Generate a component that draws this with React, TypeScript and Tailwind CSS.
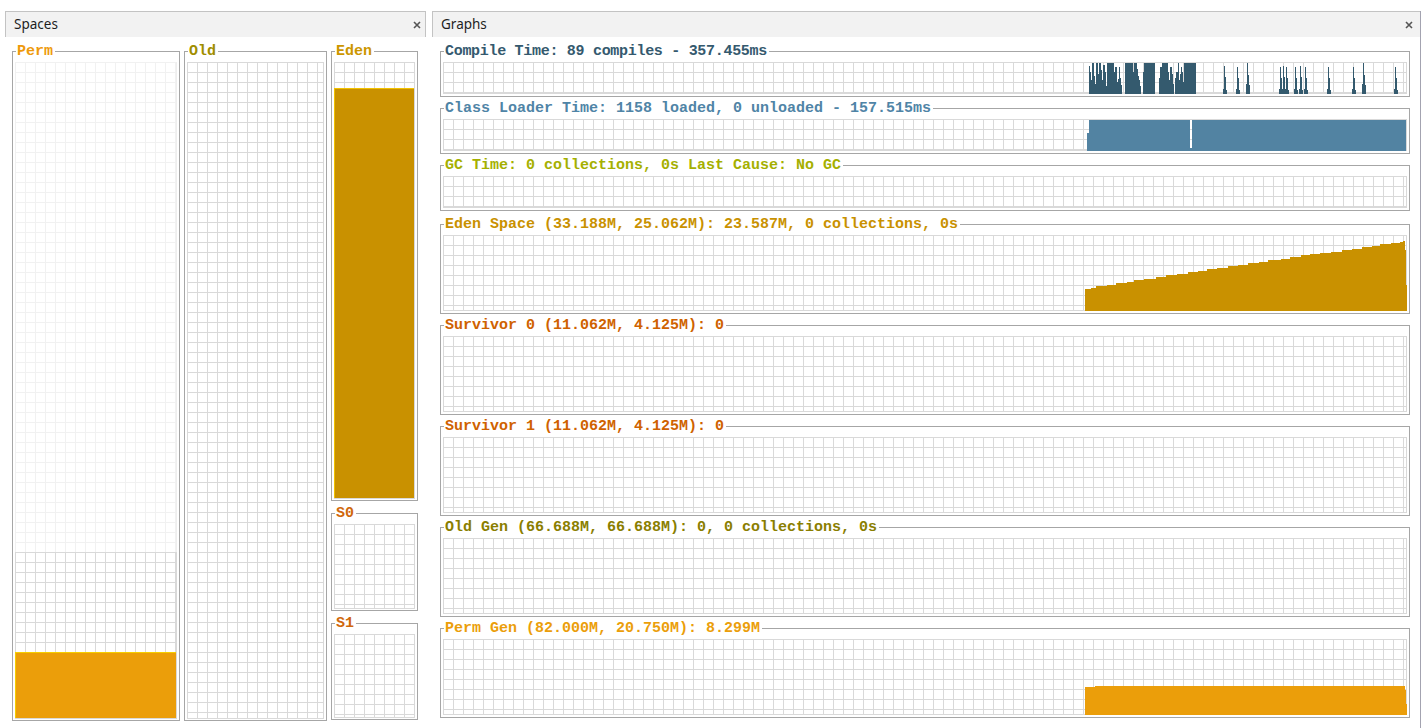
import type { ReactNode } from "react";

/**
 * VisualGC style view: Spaces + Graphs panels
 */

const GRID =
  "bg-[linear-gradient(to_right,#d9d9d9_1px,transparent_1px),linear-gradient(to_bottom,#d9d9d9_1px,transparent_1px)] bg-[length:10px_10px] border-r border-b border-[#d9d9d9]";
const FAINT =
  "bg-[linear-gradient(to_right,#f1f1f1_1px,transparent_1px),linear-gradient(to_bottom,#f1f1f1_1px,transparent_1px)] bg-[length:10px_10px] border-r border-[#eeeeee]";

type Bar = [number, number, number]; // x0, x1 (page px), height

function spike(x: number, h: number, base = 5): Bar[] {
  return [
    [x - 1, x, base],
    [x, x + 1, h],
    [x + 1, x + 2, Math.round(h * 0.6)],
    [x + 2, x + 3, base - 1],
  ];
}

const compileRaw: [number, number, number][] = [
  [1089, 1, 28], [1090, 1, 22], [1091, 1, 14], [1092, 2, 31], [1094, 1, 18], [1095, 1, 10],
  [1096, 2, 31], [1098, 1, 20], [1099, 2, 31], [1101, 1, 24], [1102, 1, 14], [1103, 2, 29],
  [1105, 1, 22], [1106, 1, 8], [1107, 7, 31], [1114, 1, 22], [1115, 2, 27], [1117, 1, 12],
  [1118, 1, 15], [1119, 1, 27], [1120, 1, 16], [1121, 1, 9], [1125, 8, 31], [1133, 1, 22],
  [1134, 3, 31], [1137, 1, 25], [1138, 1, 18], [1139, 1, 14], [1140, 1, 8],
  [1143, 1, 22], [1144, 11, 31],
  [1159, 1, 16], [1160, 2, 27], [1162, 6, 31], [1168, 1, 22], [1169, 1, 14], [1170, 2, 27],
  [1172, 1, 20], [1173, 1, 10],
  [1175, 1, 16], [1176, 2, 22], [1178, 1, 31], [1179, 1, 14], [1180, 1, 20], [1181, 1, 27],
  [1182, 1, 22], [1183, 1, 12], [1184, 12, 31],
];

const compileBars: Bar[] = [
  ...compileRaw.map(([x, w, h]) => [x, x + w, h] as Bar),
  ...spike(1224, 28),
  ...spike(1237, 27),
  ...spike(1247, 31, 10),
  ...spike(1280, 27),
  ...spike(1283, 28),
  ...spike(1286, 27),
  ...spike(1295, 27),
  ...spike(1300, 28),
  ...spike(1305, 27),
  ...spike(1328, 27),
  ...spike(1353, 27),
  ...spike(1363, 31, 10),
  ...spike(1395, 27),
];

const classBars: Bar[] = [
  [1087, 1089, 18],
  [1089, 1190, 31],
  [1190, 1192, 3],
  [1192, 1406, 31],
];

const edenBars: Bar[] = [
  [1085, 1091, 23], [1091, 1096, 24], [1096, 1107, 26], [1107, 1116, 27], [1116, 1127, 29],
  [1127, 1134, 30], [1134, 1144, 32], [1144, 1156, 33], [1156, 1166, 35], [1166, 1177, 37],
  [1177, 1188, 38], [1188, 1198, 40], [1198, 1207, 41], [1207, 1217, 43], [1217, 1228, 44],
  [1228, 1238, 46], [1238, 1248, 47], [1248, 1259, 49], [1259, 1268, 50], [1268, 1281, 52],
  [1281, 1290, 53], [1290, 1301, 55], [1301, 1310, 57], [1310, 1320, 58], [1320, 1331, 60],
  [1331, 1342, 61], [1342, 1352, 63], [1352, 1362, 64], [1362, 1372, 66], [1372, 1380, 67],
  [1380, 1391, 69], [1391, 1400, 70], [1400, 1403, 71], [1403, 1405, 72], [1405, 1406, 63],
  [1406, 1407, 27],
];

const permBars: Bar[] = [
  [1085, 1095, 29],
  [1095, 1405, 30],
  [1405, 1406, 26],
  [1406, 1407, 11],
];

function Plot({ bars, color, vbH }: { bars: Bar[]; color: string; vbH: number }) {
  return (
    <svg
      className="absolute -right-px -bottom-px h-[calc(100%+1px)] w-[322px]"
      viewBox={`0 0 322 ${vbH}`}
      preserveAspectRatio="none"
    >
      {bars.map(([a, b, h], i) => (
        <rect key={i} x={a - 1085} width={b - a} y={vbH - h} height={h} fill={color} shapeRendering="crispEdges" />
      ))}
    </svg>
  );
}

function Titled({
  title,
  tone,
  className,
  pb,
  children,
}: {
  title: string;
  tone: string;
  className: string;
  pb: string;
  children: ReactNode;
}) {
  return (
    <div className={`flex flex-col min-w-0 ${className}`}>
      <div className="flex h-[16px] shrink-0">
        <div className="w-[4px] h-[8px] self-end border-t border-l border-[#a6a6a6]" />
        <span className={`pl-[1px] pr-[2px] pt-[1px] leading-[16px] text-[15px] font-bold whitespace-nowrap ${tone}`}>
          {title}
        </span>
        <div className="flex-1 h-[8px] self-end border-t border-r border-[#a6a6a6]" />
      </div>
      <div className={`flex-1 min-h-0 flex flex-col border-l border-r border-b border-[#a6a6a6] px-[2px] pt-[3px] ${pb}`}>
        {children}
      </div>
    </div>
  );
}

function CloseX() {
  return (
    <svg width="8" height="8" viewBox="0 0 8 8">
      <path d="M1 1L7 7M7 1L1 7" stroke="#555" strokeWidth="1.6" />
    </svg>
  );
}

export default function App() {
  return (
    <div className="w-[1424px] h-[728px] bg-white flex gap-[6px] pl-[5px] pt-[11px] overflow-hidden font-['Liberation_Mono',monospace]">
      {/* Spaces */}
      <div className="w-[421px] flex flex-col">
        <div className="h-[26px] shrink-0 flex items-center justify-between bg-[#f2f2f2] border-t border-l border-r border-[#c3c3c3] pl-[8px] pr-[4px]">
          <span className="font-['Noto_Sans',sans-serif] text-[13.5px] text-[#1e1e1e]">Spaces</span>
          <CloseX />
        </div>
        <div className="flex-1 flex gap-[4px] pl-[7px] pt-[6px] pb-[7px]">
          <Titled title="Perm" tone="text-[#ee9a0c]" className="w-[168px]" pb="pb-[1px]">
            <div className="flex-1 flex flex-col">
              <div className={`flex-1 ${FAINT}`} />
              <div className={`h-[167px] flex flex-col justify-end ${GRID}`}>
                <div className="h-[66px] bg-[#eb9e0a] border-t border-l border-[#f7cf00] border-r-[#a87205]" />
              </div>
            </div>
          </Titled>
          <Titled title="Old" tone="text-[#a08e00]" className="w-[143px]" pb="pb-[1px]">
            <div className={`flex-1 ${GRID}`} />
          </Titled>
          <div className="w-[87px] flex flex-col gap-[4px]">
            <Titled title="Eden" tone="text-[#cc9600]" className="h-[458px]" pb="pb-[1px]">
              <div className={`flex-1 flex flex-col justify-end ${GRID}`}>
                <div className="h-[410px] bg-[#c99100] border-t border-l border-[#f2c200] border-r-[#8c6a00]" />
              </div>
            </Titled>
            <Titled title="S0" tone="text-[#d0680c]" className="h-[106px]" pb="pb-[1px]">
              <div className={`flex-1 ${GRID}`} />
            </Titled>
            <Titled title="S1" tone="text-[#d0680c]" className="h-[105px]" pb="pb-[1px]">
              <div className={`flex-1 ${GRID}`} />
            </Titled>
          </div>
        </div>
      </div>

      {/* Graphs */}
      <div className="w-[989px] flex flex-col border-r border-[#a3a3b0]">
        <div className="h-[26px] shrink-0 flex items-center justify-between bg-[#f2f2f2] border-t border-l border-[#c3c3c3] pl-[8px] pr-[7px]">
          <span className="font-['Noto_Sans',sans-serif] text-[13.5px] text-[#1e1e1e]">Graphs</span>
          <CloseX />
        </div>
        <div className="flex-1 flex flex-col gap-[3px] pl-[8px] pr-[10px] pt-[6px] pb-[10px]">
          <Titled title="Compile Time: 89 compiles - 357.455ms" tone="text-[#34596e] tracking-[-0.3px]" className="h-[54px] shrink-0" pb="pb-[2px]">
            <div className={`relative h-[32px] ${GRID}`}>
              <Plot bars={compileBars} color="#345a6e" vbH={32} />
            </div>
          </Titled>
          <Titled title="Class Loader Time: 1158 loaded, 0 unloaded - 157.515ms" tone="text-[#4f84a6]" className="h-[54px] shrink-0" pb="pb-[2px]">
            <div className={`relative h-[32px] ${GRID}`}>
              <Plot bars={classBars} color="#5283a2" vbH={32} />
            </div>
          </Titled>
          <Titled title="GC Time: 0 collections, 0s Last Cause: No GC" tone="text-[#a5b000]" className="h-[54px] shrink-0" pb="pb-[2px]">
            <div className={`relative h-[32px] ${GRID}`} />
          </Titled>
          <Titled title="Eden Space (33.188M, 25.062M): 23.587M, 0 collections, 0s" tone="text-[#c99100]" className="flex-1 mt-[2px]" pb="pb-[2px]">
            <div className={`relative flex-1 ${GRID}`}>
              <Plot bars={edenBars} color="#c99100" vbH={78} />
            </div>
          </Titled>
          <Titled title="Survivor 0 (11.062M, 4.125M): 0" tone="text-[#cf6200]" className="flex-1" pb="pb-[2px]">
            <div className={`relative flex-1 ${GRID}`} />
          </Titled>
          <Titled title="Survivor 1 (11.062M, 4.125M): 0" tone="text-[#cf6200]" className="flex-1" pb="pb-[2px]">
            <div className={`relative flex-1 ${GRID}`} />
          </Titled>
          <Titled title="Old Gen (66.688M, 66.688M): 0, 0 collections, 0s" tone="text-[#8a7e00]" className="flex-1" pb="pb-[2px]">
            <div className={`relative flex-1 ${GRID}`} />
          </Titled>
          <Titled title="Perm Gen (82.000M, 20.750M): 8.299M" tone="text-[#eb9e0a]" className="flex-1" pb="pb-[2px]">
            <div className={`relative flex-1 ${GRID}`}>
              <Plot bars={permBars} color="#eb9e0a" vbH={78} />
            </div>
          </Titled>
        </div>
      </div>
    </div>
  );
}
